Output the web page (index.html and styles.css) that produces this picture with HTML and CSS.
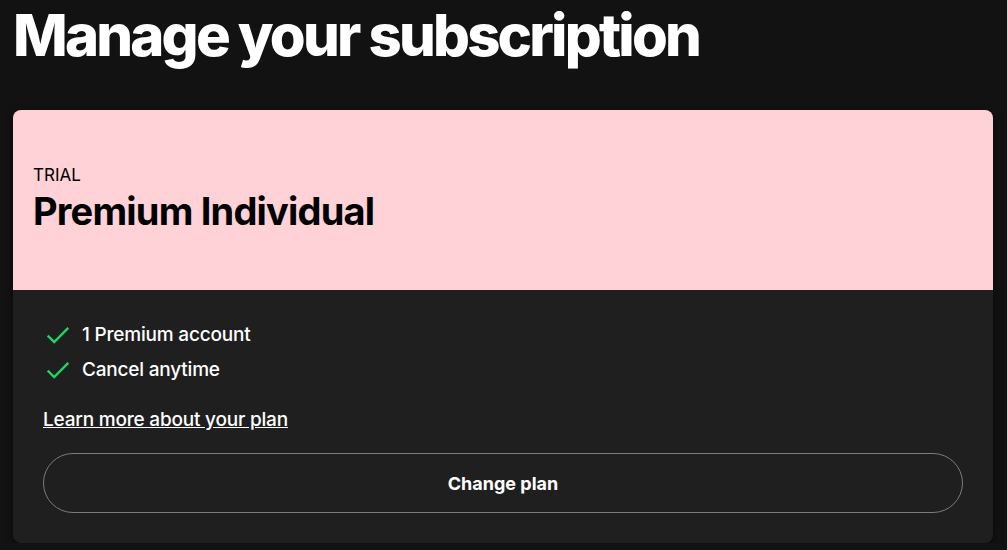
FILE: index.html
```html
<!DOCTYPE html>
<html>
<head>
	<meta charset="utf-8">
	<title>Manage your subscription</title>
	<link rel="stylesheet" href="styles.css">
</head>
<body>
	<div class="page">
		<h1 class="pageTitle">Manage your subscription</h1>

		<div class="planCard">
			<div class="planHead">
				<span class="planTag">TRIAL</span>
				<h2 class="planName">Premium Individual</h2>
			</div>
			<div class="planBody">
				<ul class="perks">
					<li>
						<svg class="tick" viewBox="0 0 24 24" width="26" height="26"><path d="M2.5 12.5l6 6L21.5 5.5" fill="none" stroke="#1ed760" stroke-width="2.2"/></svg>
						<span>1 Premium account</span>
					</li>
					<li>
						<svg class="tick" viewBox="0 0 24 24" width="26" height="26"><path d="M2.5 12.5l6 6L21.5 5.5" fill="none" stroke="#1ed760" stroke-width="2.2"/></svg>
						<span>Cancel anytime</span>
					</li>
				</ul>
				<a class="learnMore" href="#">Learn more about your plan</a>
				<button class="btnOutline">Change plan</button>
			</div>
		</div>
	</div>
</body>
</html>
```

FILE: styles.css
```css
html, body {
	margin: 0;
	background: #121212;
	font-family: Inter, "Noto Sans", sans-serif;
	color: #fff;
}

.page {
	padding: 0 14px 0 13px;
}

.pageTitle {
	margin: -1px 0 39px 0;
	font-size: 58px;
	line-height: 72px;
	font-weight: 800;
	letter-spacing: -2.8px;
}

.planCard {
	background: #1f1f1f;
	border-radius: 8px;
	overflow: hidden;
	box-shadow: 0 4px 8px rgba(0, 0, 0, 0.5);
}

.planHead {
	background: #ffd2d7;
	color: #000;
	height: 180px;
	box-sizing: border-box;
	padding: 55px 20px 0 20px;
	display: flex;
	flex-direction: column;
}

.planTag {
	font-size: 17px;
	line-height: 20px;
}

.planName {
	margin: 4px 0 0 0;
	font-size: 38px;
	line-height: 44px;
	font-weight: 700;
	letter-spacing: -0.8px;
}

.planBody {
	padding: 27px 30px 30px 30px;
}

.perks {
	list-style: none;
	margin: 0;
	padding: 0 0 0 2px;
}

.perks li {
	display: flex;
	align-items: center;
	gap: 11px;
	height: 35px;
	font-size: 19px;
	font-weight: 500;
	letter-spacing: -0.2px;
}

.tick {
	flex: none;
}

.learnMore {
	display: inline-block;
	margin-top: 21px;
	color: #fff;
	font-size: 19px;
	font-weight: 500;
	letter-spacing: -0.2px;
	line-height: 24px;
}

.btnOutline {
	display: block;
	width: 100%;
	height: 60px;
	margin-top: 21px;
	border: 1px solid #7c7c7c;
	border-radius: 30px;
	background: transparent;
	color: #fff;
	font-family: inherit;
	font-size: 18px;
	font-weight: 700;
}
```
